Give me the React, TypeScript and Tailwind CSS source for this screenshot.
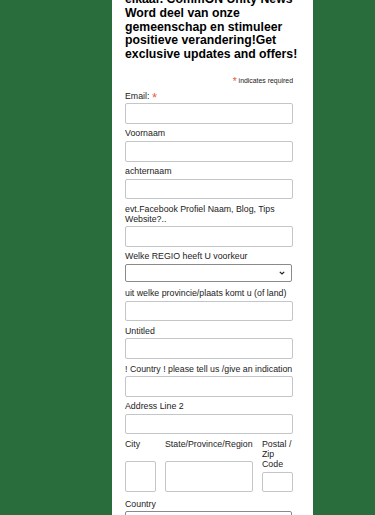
import type { ReactNode } from 'react';

const font = { fontFamily: '"Liberation Sans", Arial, sans-serif' };

function Label({ children, nowrap = true }: { children: ReactNode; nowrap?: boolean }) {
  return (
    <label className={`mb-[2.5px] block pt-[1px] text-[8.8px] leading-[10px] text-[#222] ${nowrap ? 'whitespace-nowrap' : ''}`}>
      {children}
    </label>
  );
}

function Input({ className = '' }: { className?: string }) {
  return <input type="text" className={`block h-[20.6px] w-[168px] rounded-[2px] border border-[#c3c6c8] bg-white ${className}`} />;
}

function Select() {
  return (
    <div className="relative mt-[1px] h-[18px] w-[167px] rounded-[2px] border border-[#8a8a8a] bg-white">
      <svg className="absolute right-[6px] top-[6px]" width="6" height="4" viewBox="0 0 6 4">
        <path d="M0.8 0.8 L3 3 L5.2 0.8" fill="none" stroke="#222" strokeWidth="1.2" />
      </svg>
    </div>
  );
}

function Field({ label, children }: { label: ReactNode; children?: ReactNode }) {
  return (
    <div className="mb-[3.6px]">
      <Label>{label}</Label>
      {children ?? <Input />}
    </div>
  );
}

export default function App() {
  return (
    <div className="h-[515px] w-full overflow-hidden bg-[#2a6d3d]" style={font}>
      <div className="ml-[112px] flow-root h-full w-[201px] bg-white pl-[13px]">
        {/* heading (page is scrolled, first line cut off) */}
        <h2 className="-mt-[6.8px] whitespace-nowrap text-[12.25px] font-bold leading-[13.7px] text-black">
          elkaar. CommON Unity News
          <br />
          Word deel van onze
          <br />
          gemeenschap en stimuleer
          <br />
          positieve verandering!Get
          <br />
          exclusive updates and offers!
        </h2>

        <div className="mt-[13px] w-[168px] text-right text-[6.9px] leading-[9px] text-[#222]">
          <span className="relative top-[2.5px] text-[10.3px] text-[#e85c41]">*</span> indicates required
        </div>

        <div className="mt-[5px]">
          <Field
            label={
              <>
                Email: <span className="relative top-[3px] text-[13.2px] leading-[0] text-[#e85c41]">*</span>
              </>
            }
          />
          <Field label="Voornaam" />
          <Field label="achternaam" />
          <div className="mb-[3.6px]">
            <Label>
              evt.Facebook Profiel Naam, Blog, Tips
              <br />
              Website?..
            </Label>
            <Input />
          </div>
          <div className="mb-[5.3px]">
            <Label>Welke REGIO heeft U voorkeur</Label>
            <Select />
          </div>
          <Field label="uit welke provincie/plaats komt u (of land)" />
          <Field label="Untitled" />
          <Field label="! Country ! please tell us /give an indication" />
          <Field label="Address Line 2" />

          <div className="mb-[5.5px] mt-[2.5px] flex w-[168px] gap-[9px]">
            <div className="flex w-[31px] flex-col">
              <Label>City</Label>
              <input type="text" className="mt-auto block h-[31px] w-[31px] rounded-[2px] border border-[#c3c6c8]" />
            </div>
            <div className="flex w-[88px] flex-col">
              <Label>State/Province/Region</Label>
              <input type="text" className="mt-auto block h-[31px] w-[88px] rounded-[2px] border border-[#c3c6c8]" />
            </div>
            <div className="flex w-[31px] flex-col">
              <Label nowrap={false}>Postal / Zip Code</Label>
              <Input className="mt-auto !w-[31px]" />
            </div>
          </div>

          <div>
            <Label>Country</Label>
            <Select />
          </div>
        </div>
      </div>
    </div>
  );
}
